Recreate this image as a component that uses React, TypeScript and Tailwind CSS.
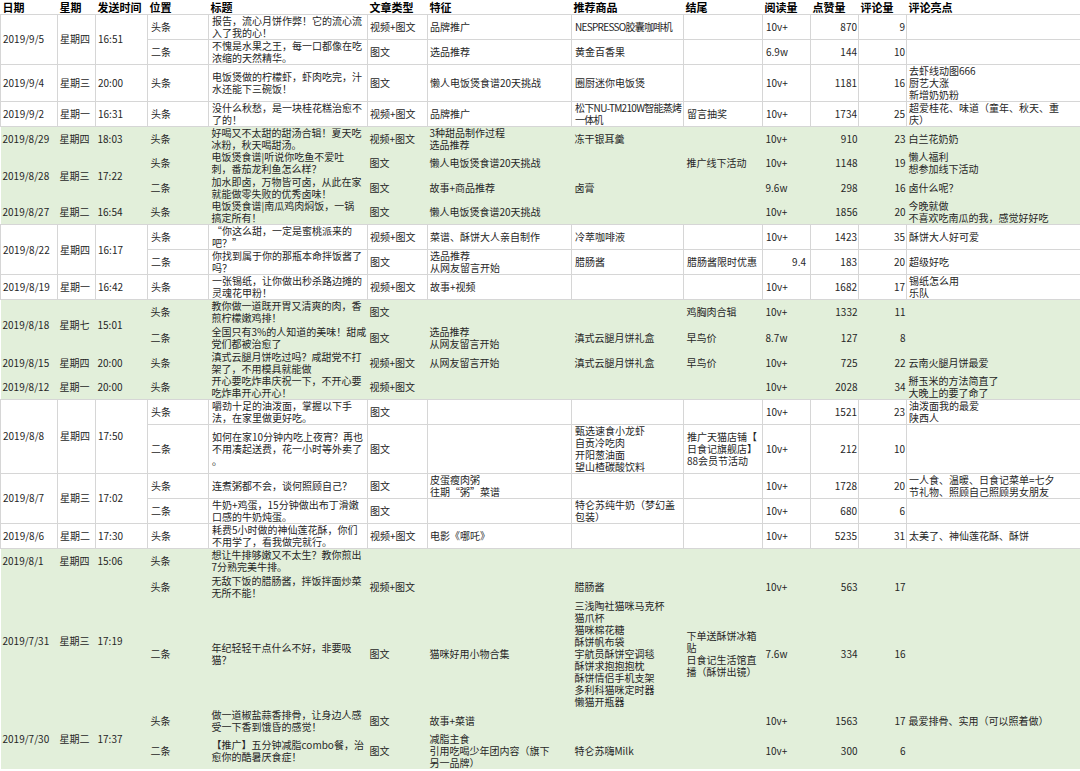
import React from 'react';

type Row = {
  g?: [string, string, string, number];
  pos: string;
  title: string[];
  type?: string;
  feat?: string[];
  prod?: string[];
  tight?: boolean;
  end?: string[];
  read?: string;
  readRight?: boolean;
  likes?: string;
  cmts?: string;
  hi?: string[];
  h: string;
  green?: boolean;
};

const rows: Row[] = [
  { g: ['2019/9/5', '星期四', '16:51', 2], pos: '头条', title: ['报告，流心月饼作弊！它的流心流', '入了我的心！'], type: '视频+图文', feat: ['品牌推广'], prod: ['NESPRESSO胶囊咖啡机'], tight: true, read: '10v+', likes: '870', cmts: '9', h: 'h-[24px]' },
  { pos: '二条', title: ['不愧是水果之王，每一口都像在吃', '浓缩的天然精华。'], type: '图文', feat: ['选品推荐'], prod: ['黄金百香果'], read: '6.9w', likes: '144', cmts: '10', h: 'h-[25px]' },
  { g: ['2019/9/4', '星期三', '20:00', 1], pos: '头条', title: ['电饭煲做的柠檬虾，虾肉吃完，汁', '水还能下三碗饭！'], type: '图文', feat: ['懒人电饭煲食谱20天挑战'], prod: ['圈厨迷你电饭煲'], read: '10v+', likes: '1181', cmts: '16', hi: ['去虾线动图666', '厨艺大涨', '新增奶奶粉'], h: 'h-[37px]' },
  { g: ['2019/9/2', '星期一', '16:31', 1], pos: '头条', title: ['没什么秋愁，是一块桂花糕治愈不', '了的！'], type: '视频+图文', feat: ['品牌推广'], prod: ['松下NU-TM210W智能蒸烤', '一体机'], tight: true, end: ['留言抽奖'], read: '10v+', likes: '1734', cmts: '25', hi: ['超爱桂花、味道（童年、秋天、重', '庆）'], h: 'h-[25px]' },
  { g: ['2019/8/29', '星期四', '18:03', 1], green: true, pos: '头条', title: ['好喝又不太甜的甜汤合辑！夏天吃', '冰粉，秋天喝甜汤。'], type: '视频+图文', feat: ['3种甜品制作过程', '选品推荐'], prod: ['冻干银耳羹'], read: '10v+', likes: '910', cmts: '23', hi: ['白兰花奶奶'], h: 'h-[25px]' },
  { g: ['2019/8/28', '星期三', '17:22', 2], green: true, pos: '头条', title: ['电饭煲食谱|听说你吃鱼不爱吐', '刺，番茄龙利鱼怎么样？'], type: '图文', feat: ['懒人电饭煲食谱20天挑战'], end: ['推广线下活动'], read: '10v+', likes: '1148', cmts: '19', hi: ['懒人福利', '想参加线下活动'], h: 'h-[24px]' },
  { green: true, pos: '二条', title: ['加水即卤，万物皆可卤，从此在家', '就能做零失败的优秀卤味！'], type: '图文', feat: ['故事+商品推荐'], prod: ['卤膏'], read: '9.6w', likes: '298', cmts: '16', hi: ['卤什么呢？'], h: 'h-[25px]' },
  { g: ['2019/8/27', '星期二', '16:54', 1], green: true, pos: '头条', title: ['电饭煲食谱|南瓜鸡肉焖饭，一锅', '搞定所有！'], type: '图文', feat: ['懒人电饭煲食谱20天挑战'], read: '10v+', likes: '1856', cmts: '20', hi: ['今晚就做', '不喜欢吃南瓜的我，感觉好好吃'], h: 'h-[24px]' },
  { g: ['2019/8/22', '星期四', '16:17', 2], pos: '头条', title: ['“你这么甜，一定是蜜桃派来的', '吧？”'], type: '视频+图文', feat: ['菜谱、酥饼大人亲自制作'], prod: ['冷萃咖啡液'], read: '10v+', likes: '1423', cmts: '35', hi: ['酥饼大人好可爱'], h: 'h-[24px]' },
  { pos: '二条', title: ['你找到属于你的那瓶本命拌饭酱了', '吗？'], type: '图文', feat: ['选品推荐', '从网友留言开始'], prod: ['腊肠酱'], end: ['腊肠酱限时优惠'], read: '9.4', readRight: true, likes: '183', cmts: '20', hi: ['超级好吃'], h: 'h-[24px]' },
  { g: ['2019/8/19', '星期一', '16:42', 1], pos: '头条', title: ['一张锡纸，让你做出秒杀路边摊的', '灵魂花甲粉！'], type: '视频+图文', feat: ['故事+视频'], read: '10v+', likes: '1682', cmts: '17', hi: ['锡纸怎么用', '乐队'], h: 'h-[24px]' },
  { g: ['2019/8/18', '星期七', '15:01', 2], green: true, pos: '头条', title: ['教你做一道既开胃又清爽的肉，香', '煎柠檬嫩鸡排！'], type: '图文', end: ['鸡胸肉合辑'], read: '10v+', likes: '1332', cmts: '11', h: 'h-[25px]' },
  { green: true, pos: '二条', title: ['全国只有3%的人知道的美味！甜咸', '党们都被治愈了'], type: '图文', feat: ['选品推荐', '从网友留言开始'], prod: ['滇式云腿月饼礼盒'], end: ['早鸟价'], read: '8.7w', likes: '127', cmts: '8', h: 'h-[26px]' },
  { g: ['2019/8/15', '星期四', '20:00', 1], green: true, pos: '头条', title: ['滇式云腿月饼吃过吗？咸甜党不打', '架了，不用模具就能做'], type: '视频+图文', feat: ['从网友留言开始'], prod: ['滇式云腿月饼礼盒'], end: ['早鸟价'], read: '10v+', likes: '725', cmts: '22', hi: ['云南火腿月饼最爱'], h: 'h-[24px]' },
  { g: ['2019/8/12', '星期一', '20:00', 1], green: true, pos: '头条', title: ['开心要吃炸串庆祝一下，不开心要', '吃炸串开心开心！'], type: '视频+图文', read: '10v+', likes: '2028', cmts: '34', hi: ['掰玉米的方法简直了', '大晚上的要了命了'], h: 'h-[24px]' },
  { g: ['2019/8/8', '星期四', '17:50', 2], pos: '头条', title: ['嚼劲十足的油泼面，掌握以下手', '法，在家里做更好吃。'], type: '图文', read: '10v+', likes: '1521', cmts: '23', hi: ['油泼面我的最爱', '陕西人'], h: 'h-[24px]' },
  { pos: '二条', title: ['如何在家10分钟内吃上夜宵？再也', '不用凑起送费，花一小时等外卖了', '。'], type: '图文', prod: ['甄选速食小龙虾', '自贡冷吃肉', '开阳葱油面', '望山楂碳酸饮料'], end: ['推广天猫店铺【', '日食记旗舰店】', '88会员节活动'], read: '10v+', likes: '212', cmts: '10', h: 'h-[48px]' },
  { g: ['2019/8/7', '星期三', '17:02', 2], pos: '头条', title: ['连煮粥都不会，谈何照顾自己？'], type: '图文', feat: ['皮蛋瘦肉粥', '往期“粥”菜谱'], read: '10v+', likes: '1728', cmts: '20', hi: ['一人食、温暖、日食记菜单=七夕', '节礼物、照顾自己照顾男女朋友'], h: 'h-[24px]' },
  { pos: '二条', title: ['牛奶+鸡蛋，15分钟做出布丁滑嫩', '口感的牛奶炖蛋。'], type: '图文', prod: ['特仑苏纯牛奶（梦幻盖', '包装）'], read: '10v+', likes: '680', cmts: '6', h: 'h-[24px]' },
  { g: ['2019/8/6', '星期二', '17:30', 1], pos: '头条', title: ['耗费5小时做的神仙莲花酥，你们', '不用学了，看我做完就行。'], type: '视频+图文', feat: ['电影《哪吒》'], read: '10v+', likes: '5235', cmts: '31', hi: ['太美了、神仙莲花酥、酥饼'], h: 'h-[24px]' },
  { g: ['2019/8/1', '星期四', '15:06', 1], green: true, pos: '头条', title: ['想让牛排够嫩又不太生？教你煎出', '7分熟完美牛排。'], h: 'h-[26px]' },
  { g: ['2019/7/31', '星期三', '17:19', 2], green: true, pos: '头条', title: ['无敌下饭的腊肠酱，拌饭拌面炒菜', '无所不能！'], type: '视频+图文', prod: ['腊肠酱'], read: '10v+', likes: '563', cmts: '17', h: 'h-[25px]' },
  { green: true, pos: '二条', title: ['年纪轻轻干点什么不好，非要吸', '猫？'], type: '图文', feat: ['猫咪好用小物合集'], prod: ['三浅陶社猫咪马克杯', '猫爪杯', '猫咪棉花糖', '酥饼帆布袋', '宇航员酥饼空调毯', '酥饼求抱抱抱枕', '酥饼情侣手机支架', '多利科猫咪定时器', '懒猫开瓶器'], end: ['下单送酥饼冰箱', '贴', '日食记生活馆直', '播（酥饼出镜）'], read: '7.6w', likes: '334', cmts: '16', h: 'h-[109px]' },
  { g: ['2019/7/30', '星期二', '17:37', 2], green: true, pos: '头条', title: ['做一道椒盐蒜香排骨，让身边人感', '受一下香到饿昏的感觉！'], type: '图文', feat: ['故事+菜谱'], read: '10v+', likes: '1563', cmts: '17', hi: ['最爱排骨、实用（可以照着做）'], h: 'h-[25px]' },
  { green: true, pos: '二条', title: ['【推广】五分钟减脂combo餐，治', '愈你的酷暑厌食症！'], type: '图文', feat: ['减脂主食', '引用吃喝少年团内容（旗下', '另一品牌）'], prod: ['特仑苏嗨Milk'], read: '10v+', likes: '300', cmts: '6', h: 'h-[36px]' },
];

const headers = ['日期', '星期', '发送时间', '位置', '标题', '文章类型', '特征', '推荐商品', '结尾', '阅读量', '点赞量', '评论量', '评论亮点'];
const widths = ['w-[57px]', 'w-[38px]', 'w-[52px]', 'w-[61px]', 'w-[159px]', 'w-[60px]', 'w-[144px]', 'w-[112px]', 'w-[79px]', 'w-[48px]', 'w-[48px]', 'w-[48px]', 'w-[174px]'];

function Lines({ items }: { items?: string[] }) {
  if (!items) return null;
  return (
    <>
      {items.map((t, i) => (
        <div key={i}>{t}</div>
      ))}
    </>
  );
}

export default function App() {
  return (
    <div className="w-[1080px] h-[771px] bg-white overflow-hidden text-[#262626] text-[10px] leading-[12px] font-['Noto_Sans_CJK_SC',sans-serif]">
      <table className="w-[1080px] table-fixed border-collapse">
        <colgroup>
          {widths.map((w, i) => (
            <col key={i} className={w} />
          ))}
        </colgroup>
        <thead>
          <tr className="h-[14px]">
            {headers.map((h) => (
              <th key={h} className="px-[2px] py-0 text-left text-[11px] font-bold text-black align-middle border-b border-[#d6d6d6]">
                {h}
              </th>
            ))}
          </tr>
        </thead>
        <tbody>
          {rows.map((r, i) => {
            const c = r.green
              ? 'bg-[#e2efda] px-[2px] py-0 align-middle whitespace-nowrap overflow-visible'
              : 'bg-white px-[2px] py-0 align-middle whitespace-nowrap overflow-visible border border-[#d6d6d6]';
            return (
              <tr key={i} className={r.h}>
                {r.g && (
                  <>
                    <td rowSpan={r.g[3]} className={c}>{r.g[0]}</td>
                    <td rowSpan={r.g[3]} className={c}>{r.g[1]}</td>
                    <td rowSpan={r.g[3]} className={c}>{r.g[2]}</td>
                  </>
                )}
                <td className={c + ' pl-[3px]'}>{r.pos}</td>
                <td className={c + ' pl-[3px]'}><Lines items={r.title} /></td>
                <td className={c}>{r.type}</td>
                <td className={c}><Lines items={r.feat} /></td>
                <td className={c + ' pl-[3px]' + (r.tight ? ' tracking-[-0.7px]' : '')}><Lines items={r.prod} /></td>
                <td className={c + ' pl-[3px]'}><Lines items={r.end} /></td>
                <td className={c + (r.readRight ? ' text-right pr-[4px]' : ' pl-[3px]')}>{r.read}</td>
                <td className={c + ' text-right pr-[1px]'}>{r.likes}</td>
                <td className={c + ' text-right pr-[1px]'}>{r.cmts}</td>
                <td className={c}><Lines items={r.hi} /></td>
              </tr>
            );
          })}
        </tbody>
      </table>
    </div>
  );
}
